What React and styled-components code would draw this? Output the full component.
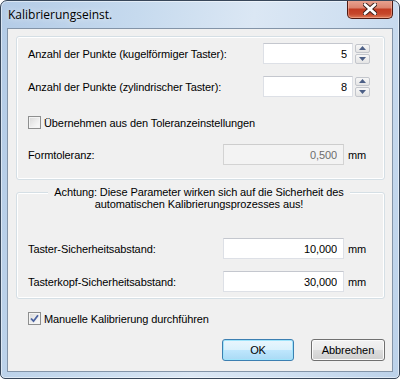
import React from 'react';
import styled, { createGlobalStyle } from 'styled-components';

const GlobalStyle = createGlobalStyle`
  html, body {
    margin: 0;
    padding: 0;
    background: #ffffff;
  }
  body {
    font-family: "Liberation Sans", Arial, sans-serif;
    font-size: 11px;
    letter-spacing: -0.1px;
    color: #000;
  }
  * {
    box-sizing: border-box;
  }
`;

const Window = styled.div`
  width: 400px;
  height: 379px;
  display: flex;
  flex-direction: column;
  border: 1px solid #38475a;
  border-radius: 7px 7px 5px 5px;
  background: linear-gradient(
    100deg,
    #b3cbe6 0%,
    #c6daee 30%,
    #dbe7f4 55%,
    #d0e0f1 75%,
    #bcd2ea 100%
  );
  box-shadow: inset 0 0 0 1px rgba(255, 255, 255, 0.5);
  overflow: hidden;
`;

const TitleBar = styled.div`
  height: 27px;
  flex: none;
  display: flex;
  align-items: flex-start;
  padding: 0 6px 0 7px;
`;

const Title = styled.div`
  flex: 1;
  margin-top: 6px;
  font-family: "Open Sans", "Noto Sans", sans-serif;
  font-size: 12px;
  letter-spacing: 0;
  line-height: 16px;
  color: #000;
  text-shadow: 0 0 6px rgba(255, 255, 255, 0.9);
`;

const CloseButton = styled.div`
  width: 46px;
  height: 19px;
  margin-top: -1px;
  display: flex;
  align-items: center;
  justify-content: center;
  border: 1px solid #4e1a12;
  border-top: none;
  border-radius: 0 0 5px 5px;
  background: linear-gradient(
    #eaa593 0%,
    #dc8570 42%,
    #c23c22 52%,
    #c6472b 78%,
    #dd7c59 100%
  );
  box-shadow: inset 0 0 0 1px rgba(255, 200, 180, 0.45);
`;

const Client = styled.div`
  flex: 1;
  margin: 0 6px 6px 6px;
  border: 1px solid #8394a8;
  background: #f0f0f0;
  display: flex;
  flex-direction: column;
  padding: 7px 7px 0 8px;
`;

const Group = styled.div`
  display: flex;
  flex-direction: column;
  margin-top: ${(p) => p.$top || 0}px;
  padding: ${(p) => p.$pad};
  border: 1px solid #d5dfe5;
  border-radius: 3px;
  box-shadow: inset 0 0 0 1px #ffffff;
`;

const Caption = styled.div`
  align-self: center;
  margin-top: -7px;
  padding: 0 6px;
  background: #f0f0f0;
  text-align: center;
  line-height: 12px;
`;

const Row = styled.div`
  height: 21px;
  flex: none;
  display: flex;
  align-items: center;
  margin-top: ${(p) => p.$top || 0}px;
  padding-left: ${(p) => p.$indent || 0}px;
`;

const Label = styled.div`
  flex: 1;
  white-space: nowrap;
`;

const Field = styled.input`
  width: ${(p) => p.$width}px;
  height: 21px;
  margin: 0;
  padding: 0 ${(p) => p.$padRight}px 0 2px;
  font-family: inherit;
  font-size: 11px;
  letter-spacing: inherit;
  text-align: right;
  color: ${(p) => (p.disabled ? '#6d6d6d' : '#000')};
  background: ${(p) => (p.disabled ? '#f3f3f3' : '#ffffff')};
  border: 1px solid ${(p) => (p.disabled ? '#d3d3d3' : '#dde0e6')};
  border-top-color: ${(p) => (p.disabled ? '#cdcdcd' : '#c4c7ce')};
  outline: none;
`;

const Unit = styled.div`
  width: 22px;
  margin-left: 4px;
`;

const Spin = styled.div`
  width: 15px;
  height: 20px;
  margin-left: 2px;
  display: flex;
  flex-direction: column;
  gap: 1px;
`;

const SpinHalf = styled.div`
  flex: 1;
  display: flex;
  align-items: center;
  justify-content: center;
  border: 1px solid #c3c6cc;
  border-radius: 2px;
  background: linear-gradient(#f7f7f7, #e4e4e4);
`;

const Check = styled.div`
  width: 13px;
  height: 13px;
  margin-right: 3px;
  border: 1px solid #8e8f8f;
  display: flex;
  align-items: center;
  justify-content: center;
  background: linear-gradient(135deg, #d8d8d8 0%, #f0f0f0 60%, #fbfbfb 100%);
  box-shadow: inset 0 0 0 1px #f4f4f4;
`;

const ButtonRow = styled.div`
  display: flex;
  justify-content: flex-end;
  gap: 17px;
  margin-top: 10px;
`;

const Button = styled.div`
  width: ${(p) => p.$width}px;
  height: 22px;
  display: flex;
  align-items: center;
  justify-content: center;
  border-radius: 3px;
  border: 1px solid ${(p) => (p.$default ? '#3c7fb1' : '#707070')};
  background: ${(p) =>
    p.$default
      ? 'linear-gradient(#e9f6fd 0%, #daf1fc 48%, #bee6fd 52%, #a9daf5 100%)'
      : 'linear-gradient(#f2f2f2 0%, #ebebeb 48%, #dddddd 52%, #cfcfcf 100%)'};
  box-shadow: inset 0 0 0 1px ${(p) => (p.$default ? '#9fe4fb' : '#fbfbfb')};
`;

function Arrow({ up }) {
  return (
    <svg width="7" height="4" viewBox="0 0 7 4">
      <path d={up ? 'M0 4 L3.5 0 L7 4 Z' : 'M0 0 L7 0 L3.5 4 Z'} fill="#4c5f86" />
    </svg>
  );
}

function SpinBox({ value }) {
  return (
    <>
      <Field $width={90} $padRight={5} readOnly value={value} />
      <Spin>
        <SpinHalf>
          <Arrow up />
        </SpinHalf>
        <SpinHalf>
          <Arrow />
        </SpinHalf>
      </Spin>
    </>
  );
}

function CheckBox({ checked }) {
  return (
    <Check>
      {checked && (
        <svg width="9" height="9" viewBox="0 0 9 9">
          <path
            d="M1 4.5 L3.5 7.2 L8 1.2"
            fill="none"
            stroke="#4a62a0"
            strokeWidth="1.8"
          />
        </svg>
      )}
    </Check>
  );
}

export default function App() {
  return (
    <>
      <GlobalStyle />
      <Window>
        <TitleBar>
          <Title>Kalibrierungseinst.</Title>
          <CloseButton>
            <svg width="14" height="12" viewBox="0 0 14 12">
              <path
                d="M2 1.5 L12 10.5 M12 1.5 L2 10.5"
                stroke="#3a1f1a"
                strokeWidth="4.6"
                strokeLinecap="round"
              />
              <path
                d="M2 1.5 L12 10.5 M12 1.5 L2 10.5"
                stroke="#ffffff"
                strokeWidth="2.8"
                strokeLinecap="round"
              />
            </svg>
          </CloseButton>
        </TitleBar>

        <Client>
          <Group $pad="6px 14px 14px 11px">
            <Row>
              <Label>Anzahl der Punkte (kugelförmiger Taster):</Label>
              <SpinBox value="5" />
            </Row>
            <Row $top={12}>
              <Label>Anzahl der Punkte (zylindrischer Taster):</Label>
              <SpinBox value="8" />
            </Row>
            <Row $top={15}>
              <CheckBox />
              <Label>Übernehmen aus den Toleranzeinstellungen</Label>
            </Row>
            <Row $top={11}>
              <Label>Formtoleranz:</Label>
              <Field $width={121} $padRight={6} disabled readOnly value="0,500" />
              <Unit>mm</Unit>
            </Row>
          </Group>

          <Group $top={12} $pad="0 14px 6px 11px">
            <Caption>
              Achtung: Diese Parameter wirken sich auf die Sicherheit des
              <br />
              automatischen Kalibrierungsprozesses aus!
            </Caption>
            <Row $top={28}>
              <Label>Taster-Sicherheitsabstand:</Label>
              <Field $width={121} $padRight={6} readOnly value="10,000" />
              <Unit>mm</Unit>
            </Row>
            <Row $top={12}>
              <Label>Tasterkopf-Sicherheitsabstand:</Label>
              <Field $width={121} $padRight={6} readOnly value="30,000" />
              <Unit>mm</Unit>
            </Row>
          </Group>

          <Row $top={9} $indent={12}>
            <CheckBox checked />
            <Label>Manuelle Kalibrierung durchführen</Label>
          </Row>

          <ButtonRow>
            <Button $width={72} $default>
              OK
            </Button>
            <Button $width={74}>Abbrechen</Button>
          </ButtonRow>
        </Client>
      </Window>
    </>
  );
}
